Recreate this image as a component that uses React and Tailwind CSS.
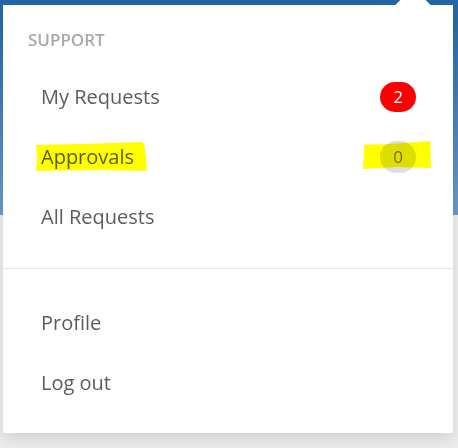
import React from "react";

const font = { fontFamily: '"Open Sans", "Noto Sans", sans-serif' };

function Highlight({ points, className }) {
  return (
    <svg
      className={"pointer-events-none absolute mix-blend-multiply " + className}
      viewBox="0 0 100 30"
      preserveAspectRatio="none"
    >
      <polygon points={points} fill="#ffff00" />
    </svg>
  );
}

function Row({ label, badge, highlight }) {
  return (
    <div className="relative flex h-[60px] items-center justify-between pl-[38px] pr-[37px]">
      <span className="text-[20px] leading-none text-[#5c5c5c]">{label}</span>
      {badge}
      {highlight}
    </div>
  );
}

export default function App() {
  return (
    <div
      className="h-[448px] w-[458px] overflow-hidden bg-[linear-gradient(to_bottom,#2266a8_0px,#6a9bce_215px,#ededed_215px,#ededed_100%)] pt-[5px]"
      style={font}
    >
      <div className="relative ml-[3px] h-[428px] w-[450px] bg-white shadow-[0_6px_14px_rgba(0,0,0,0.12)]">
        <div className="absolute -top-[11px] left-[394px] h-[32px] w-[32px] rotate-45 bg-white" />
        <div className="relative h-[62px] pl-[25px] pt-[25px] text-[17px] font-semibold leading-[20px] text-[#a8a8a8]">
          SUPPORT
        </div>
        <Row
          label="My Requests"
          badge={
            <span className="flex h-[30px] w-[36px] items-center justify-center rounded-full bg-[#ff0000] text-[17px] text-white">
              2
            </span>
          }
        />
        <Row
          label="Approvals"
          badge={
            <span className="flex h-[32px] w-[36px] items-center justify-center rounded-full bg-[#dedede] text-[17px] text-[#707070]">
              0
            </span>
          }
          highlight={
            <>
              <Highlight
                className="left-[33px] top-[15px] h-[30px] w-[112px]"
                points="0,3 40,2 95,0 97,4 98,14 99,29 60,28 0,29 1,16"
              />
              <Highlight
                className="left-[360px] top-[14px] h-[29px] w-[68px]"
                points="2,4 40,3 99,0 100,28 50,27 0,29"
              />
            </>
          }
        />
        <Row label="All Requests" />
        <div className="mt-[21px] h-px bg-[#e8e8e8]" />
        <div className="mt-[24px]">
          <Row label="Profile" />
          <Row label="Log out" />
        </div>
      </div>
    </div>
  );
}
